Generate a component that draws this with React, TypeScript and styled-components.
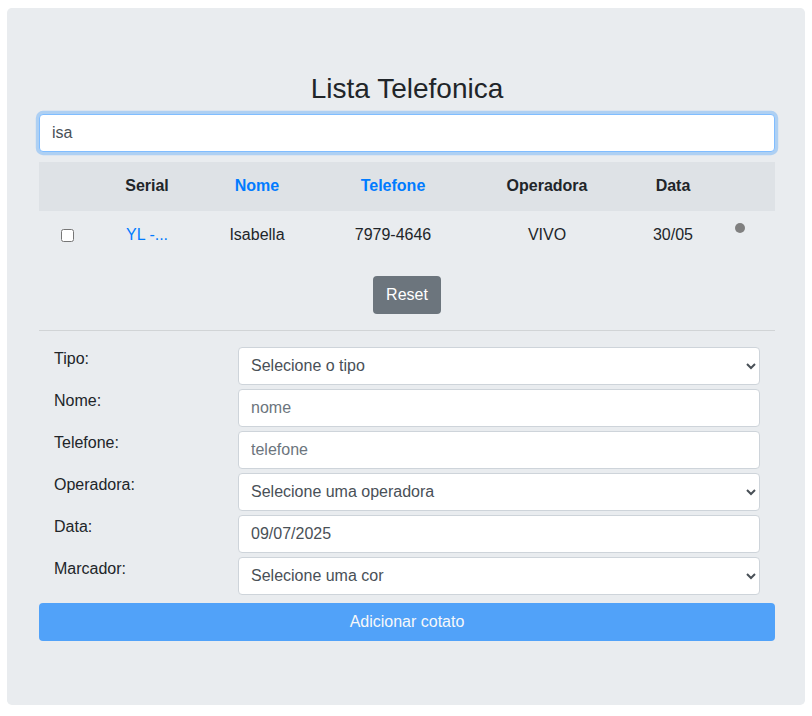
import React from 'react';
import styled, { createGlobalStyle } from 'styled-components';

const GlobalStyle = createGlobalStyle`
    body {
        margin: 8px 7px;
        font-family: "Liberation Sans", Arial, sans-serif;
        font-size: 16px;
        line-height: 1.5;
        color: #212529;
        background: #fff;
    }
    * { box-sizing: border-box; }
`;

const Jumbotron = styled.div`
    background-color: #e9ecef;
    border-radius: 4.8px;
    padding: 64px 30px 64px 32px;
`;

const Title = styled.h3`
    margin: 0 0 8px;
    font-size: 28px;
    font-weight: 500;
    line-height: 1.2;
    text-align: center;
`;

const Input = styled.input<{ focused?: boolean }>`
    display: block;
    width: 100%;
    height: 38px;
    padding: 6px 12px;
    font-family: inherit;
    font-size: 16px;
    line-height: 1.5;
    color: #495057;
    background: #fff;
    border: 1px solid ${(props) => (props.focused ? '#80bdff' : '#ced4da')};
    border-radius: 4px;
    box-shadow: ${(props) => (props.focused ? '0 0 0 3.2px rgba(0,123,255,.25)' : 'none')};
    outline: none;
    &::placeholder { color: #6c757d; }
`;

const Select = styled.select`
    display: block;
    width: 100%;
    height: 38px;
    padding: 6px 8px;
    font-family: inherit;
    font-size: 16px;
    color: #495057;
    background: #fff;
    border: 1px solid #ced4da;
    border-radius: 4px;
    outline: none;
`;

const Table = styled.table`
    width: 100%;
    margin-top: 10px;
    border-collapse: collapse;
    table-layout: fixed;
    text-align: center;
`;

const Th = styled.th<{ link?: boolean }>`
    padding: 12px;
    background: #dee2e6;
    border-bottom: 1px solid #dee2e6;
    font-weight: 700;
    color: ${(props) => (props.link ? '#007bff' : '#212529')};
`;

const Td = styled.td`
    padding: 12px;
    vertical-align: top;
`;

const SerialLink = styled.a`
    color: #007bff;
    text-decoration: none;
`;

const Check = styled.input`
    margin: 6px 0 0;
    width: 13px;
    height: 13px;
`;

const Dot = styled.span<{ color: string }>`
    display: block;
    width: 10px;
    height: 10px;
    border-radius: 50%;
    background: ${(props) => props.color};
`;

const Center = styled.div`
    display: flex;
    justify-content: center;
    margin-top: 15px;
`;

const Button = styled.button<{ variant: 'secondary' | 'primary'; block?: boolean }>`
    display: block;
    width: ${(props) => (props.block ? '100%' : 'auto')};
    height: 38px;
    padding: 6px 12px;
    font-family: inherit;
    font-size: 16px;
    line-height: 1.5;
    color: #fff;
    border: 1px solid transparent;
    border-radius: 4px;
    background: ${(props) => (props.variant === 'primary' ? '#007bff' : '#6c757d')};
    opacity: ${(props) => (props.variant === 'primary' ? 0.65 : 1)};
`;

const Rule = styled.hr`
    margin: 16px 0;
    border: 0;
    border-top: 1px solid rgba(0, 0, 0, 0.1);
`;

const FormRow = styled.div`
    display: grid;
    grid-template-columns: 25% 75%;
    margin-bottom: 4px;
`;

const Label = styled.label`
    padding: 0 15px;
`;

const Field = styled.div`
    padding: 0 15px;
`;

const Footer = styled.div`
    margin-top: 8px;
`;

export default function App() {
    return (
        <>
            <GlobalStyle />
            <Jumbotron>
                <Title>Lista Telefonica</Title>
                <Input focused defaultValue="isa" />
                <Table>
                    <colgroup>
                        <col style={{ width: 56 }} />
                        <col style={{ width: 104 }} />
                        <col style={{ width: 116 }} />
                        <col style={{ width: 156 }} />
                        <col style={{ width: 152 }} />
                        <col style={{ width: 100 }} />
                        <col />
                    </colgroup>
                    <thead>
                        <tr>
                            <Th />
                            <Th>Serial</Th>
                            <Th link>Nome</Th>
                            <Th link>Telefone</Th>
                            <Th>Operadora</Th>
                            <Th>Data</Th>
                            <Th />
                        </tr>
                    </thead>
                    <tbody>
                        <tr>
                            <Td><Check type="checkbox" /></Td>
                            <Td><SerialLink href="#">YL -...</SerialLink></Td>
                            <Td>Isabella</Td>
                            <Td>7979-4646</Td>
                            <Td>VIVO</Td>
                            <Td>30/05</Td>
                            <Td><Dot color="#808080" /></Td>
                        </tr>
                    </tbody>
                </Table>
                <Center>
                    <Button variant="secondary">Reset</Button>
                </Center>
                <Rule />
                <form>
                    <FormRow>
                        <Label>Tipo:</Label>
                        <Field>
                            <Select defaultValue="">
                                <option value="">Selecione o tipo</option>
                            </Select>
                        </Field>
                    </FormRow>
                    <FormRow>
                        <Label>Nome:</Label>
                        <Field><Input placeholder="nome" /></Field>
                    </FormRow>
                    <FormRow>
                        <Label>Telefone:</Label>
                        <Field><Input placeholder="telefone" /></Field>
                    </FormRow>
                    <FormRow>
                        <Label>Operadora:</Label>
                        <Field>
                            <Select defaultValue="">
                                <option value="">Selecione uma operadora</option>
                            </Select>
                        </Field>
                    </FormRow>
                    <FormRow>
                        <Label>Data:</Label>
                        <Field><Input defaultValue="09/07/2025" /></Field>
                    </FormRow>
                    <FormRow>
                        <Label>Marcador:</Label>
                        <Field>
                            <Select defaultValue="">
                                <option value="">Selecione uma cor</option>
                            </Select>
                        </Field>
                    </FormRow>
                    <Footer>
                        <Button variant="primary" block disabled type="button">Adicionar cotato</Button>
                    </Footer>
                </form>
            </Jumbotron>
        </>
    );
}
